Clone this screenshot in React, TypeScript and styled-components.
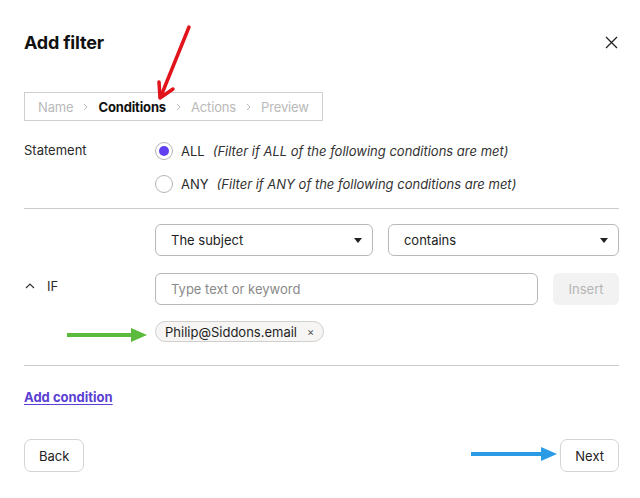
import styled, { createGlobalStyle } from 'styled-components';

const GlobalStyle = createGlobalStyle`
  html, body {
    margin: 0;
    padding: 0;
    background: #ffffff;
  }
  body {
    font-family: Inter, 'Noto Sans', 'Liberation Sans', sans-serif;
    color: #1f1f1f;
  }
`;

const Page = styled.div`
  position: relative;
  width: 640px;
  height: 498px;
  box-sizing: border-box;
  padding: 0 21px 0 24px;
  display: flex;
  flex-direction: column;
  overflow: hidden;
`;

const Header = styled.div`
  display: flex;
  align-items: center;
  justify-content: space-between;
  height: 84px;
`;

const Title = styled.h1`
  margin: 0;
  font-size: 18px;
  font-weight: 700;
  letter-spacing: -0.2px;
  color: #111;
`;

const CloseButton = styled.button`
  border: none;
  background: none;
  padding: 0;
  width: 16px;
  height: 16px;
  display: flex;
  align-items: center;
  justify-content: center;
  cursor: pointer;
`;

const Breadcrumb = styled.div`
  align-self: flex-start;
  display: flex;
  align-items: center;
  gap: 10px;
  height: 29px;
  box-sizing: border-box;
  padding: 0 13px;
  border: 1px solid #cfcfcf;
  margin-top: 8px;
  font-size: 13px;
  letter-spacing: -0.15px;
`;

const Crumb = styled.span<{ $active?: boolean }>`
  color: ${(p) => (p.$active ? '#111' : '#b9b9b9')};
  font-weight: ${(p) => (p.$active ? 700 : 400)};
`;

const CrumbSep = styled.span`
  display: flex;
  align-items: center;
`;

const StatementRow = styled.div`
  display: flex;
  margin-top: 20px;
`;

const Label = styled.div`
  width: 131px;
  flex-shrink: 0;
  padding-top: 1px;
  font-size: 13px;
  color: #2a2a2a;
`;

const RadioList = styled.div`
  display: flex;
  flex-direction: column;
  gap: 13px;
`;

const RadioRow = styled.label`
  display: flex;
  align-items: center;
  height: 20px;
  font-size: 13px;
  color: #2a2a2a;
`;

const RadioCircle = styled.span<{ $checked?: boolean }>`
  width: 18px;
  height: 18px;
  box-sizing: border-box;
  border-radius: 50%;
  border: 1px solid #b5b5b5;
  display: flex;
  align-items: center;
  justify-content: center;
  margin-right: 8px;
  &::after {
    content: '';
    width: 10px;
    height: 10px;
    border-radius: 50%;
    background: ${(p) => (p.$checked ? '#5f3ff0' : 'transparent')};
  }
`;

const RadioHint = styled.span`
  font-style: italic;
  margin-left: 8px;
  color: #333;
`;

const Divider = styled.hr<{ $top?: number }>`
  border: none;
  border-top: 1px solid #cccccc;
  margin: ${(p) => p.$top ?? 0}px 0 0;
`;

const ConditionBlock = styled.div`
  display: flex;
  align-items: center;
  padding: 15px 0 23px;
`;

const IfLabel = styled.div`
  width: 131px;
  flex-shrink: 0;
  display: flex;
  align-items: center;
  gap: 12px;
  padding-left: 1px;
  box-sizing: border-box;
  font-size: 13px;
  color: #2a2a2a;
  margin-top: 6px;
`;

const ConditionFields = styled.div`
  flex: 1;
  display: flex;
  flex-direction: column;
  gap: 17px;
`;

const FieldRow = styled.div`
  display: flex;
  gap: 15px;
`;

const Select = styled.div<{ $grow: number }>`
  flex: ${(p) => p.$grow} 1 0;
  height: 32px;
  box-sizing: border-box;
  border: 1px solid #b8b8b8;
  border-radius: 6px;
  display: flex;
  align-items: center;
  justify-content: space-between;
  padding: 0 10px 0 15px;
  font-size: 13px;
  color: #222;
`;

const TextInput = styled.input`
  flex: 1;
  height: 32px;
  box-sizing: border-box;
  border: 1px solid #b8b8b8;
  border-radius: 6px;
  padding: 0 15px;
  font-family: inherit;
  font-size: 13px;
  outline: none;
  &::placeholder {
    color: #8a8a8a;
  }
`;

const InsertButton = styled.button`
  width: 66px;
  height: 32px;
  border: none;
  border-radius: 6px;
  background: #f2f2f2;
  color: #b5b5b5;
  font-family: inherit;
  font-size: 13px;
`;

const Chips = styled.div`
  display: flex;
  margin-top: -1px;
`;

const Chip = styled.span`
  display: inline-flex;
  align-items: center;
  gap: 10px;
  height: 21px;
  box-sizing: border-box;
  padding: 0 9px;
  border: 1px solid #cfcfcf;
  border-radius: 11px;
  background: #f6f5f4;
  font-size: 13px;
  color: #1f1f1f;
`;

const ChipRemove = styled.span`
  font-size: 11px;
  color: #555;
`;

const AddLink = styled.a`
  margin-top: 23px;
  font-size: 13px;
  font-weight: 700;
  color: #5a3fd4;
  text-decoration: underline;
  text-underline-offset: 2px;
  align-self: flex-start;
  cursor: pointer;
`;

const Footer = styled.div`
  display: flex;
  justify-content: space-between;
  margin-top: 34px;
`;

const FooterButton = styled.button`
  height: 33px;
  padding: 0 14px;
  border: 1px solid #d4d4d4;
  border-radius: 7px;
  background: #fff;
  font-family: inherit;
  font-size: 13px;
  color: #222;
`;

const Annotations = styled.svg`
  position: absolute;
  left: 0;
  top: 0;
  pointer-events: none;
`;

const Caret = () => (
  <svg width="8" height="5" viewBox="0 0 8 5">
    <path d="M0 0 L8 0 L4 5 Z" fill="#222" />
  </svg>
);

const Chevron = () => (
  <CrumbSep>
    <svg width="5" height="8" viewBox="0 0 5 8">
      <path d="M1 1 L4 4 L1 7" stroke="#bbb" strokeWidth="1" fill="none" />
    </svg>
  </CrumbSep>
);

export default function App() {
  return (
    <>
      <GlobalStyle />
      <Page>
        <Header>
          <Title>Add filter</Title>
          <CloseButton aria-label="Close">
            <svg width="13" height="13" viewBox="0 0 13 13">
              <path d="M1 1 L12 12 M12 1 L1 12" stroke="#222" strokeWidth="1.3" />
            </svg>
          </CloseButton>
        </Header>

        <Breadcrumb>
          <Crumb>Name</Crumb>
          <Chevron />
          <Crumb $active>Conditions</Crumb>
          <Chevron />
          <Crumb>Actions</Crumb>
          <Chevron />
          <Crumb>Preview</Crumb>
        </Breadcrumb>

        <StatementRow>
          <Label>Statement</Label>
          <RadioList>
            <RadioRow>
              <RadioCircle $checked />
              ALL
              <RadioHint>(Filter if ALL of the following conditions are met)</RadioHint>
            </RadioRow>
            <RadioRow>
              <RadioCircle />
              ANY
              <RadioHint>(Filter if ANY of the following conditions are met)</RadioHint>
            </RadioRow>
          </RadioList>
        </StatementRow>

        <Divider $top={14} />

        <ConditionBlock>
          <IfLabel>
            <svg width="10" height="6" viewBox="0 0 10 6">
              <path d="M1 5 L5 1 L9 5" stroke="#333" strokeWidth="1.2" fill="none" />
            </svg>
            IF
          </IfLabel>
          <ConditionFields>
            <FieldRow>
              <Select $grow={217}>
                The subject
                <Caret />
              </Select>
              <Select $grow={232}>
                contains
                <Caret />
              </Select>
            </FieldRow>
            <FieldRow>
              <TextInput placeholder="Type text or keyword" />
              <InsertButton>Insert</InsertButton>
            </FieldRow>
            <Chips>
              <Chip>
                Philip@Siddons.email
                <ChipRemove>×</ChipRemove>
              </Chip>
            </Chips>
          </ConditionFields>
        </ConditionBlock>

        <Divider />

        <AddLink>Add condition</AddLink>

        <Footer>
          <FooterButton>Back</FooterButton>
          <FooterButton>Next</FooterButton>
        </Footer>

        <Annotations width="640" height="498" viewBox="0 0 640 498">
          <g stroke="#e0141a" strokeWidth="3.5" strokeLinecap="round" fill="none">
            <path d="M189 27 L161 96" />
            <path d="M159 82 L160 98 L173 89" strokeLinejoin="round" />
          </g>
          <path d="M67 335 L134 335" stroke="#5cbb3c" strokeWidth="4" />
          <path d="M131 328 L147 335 L131 342 Z" fill="#5cbb3c" />
          <path d="M471 454 L544 454" stroke="#2b9be6" strokeWidth="4" />
          <path d="M541 447 L557 454 L541 461 Z" fill="#2b9be6" />
        </Annotations>
      </Page>
    </>
  );
}
